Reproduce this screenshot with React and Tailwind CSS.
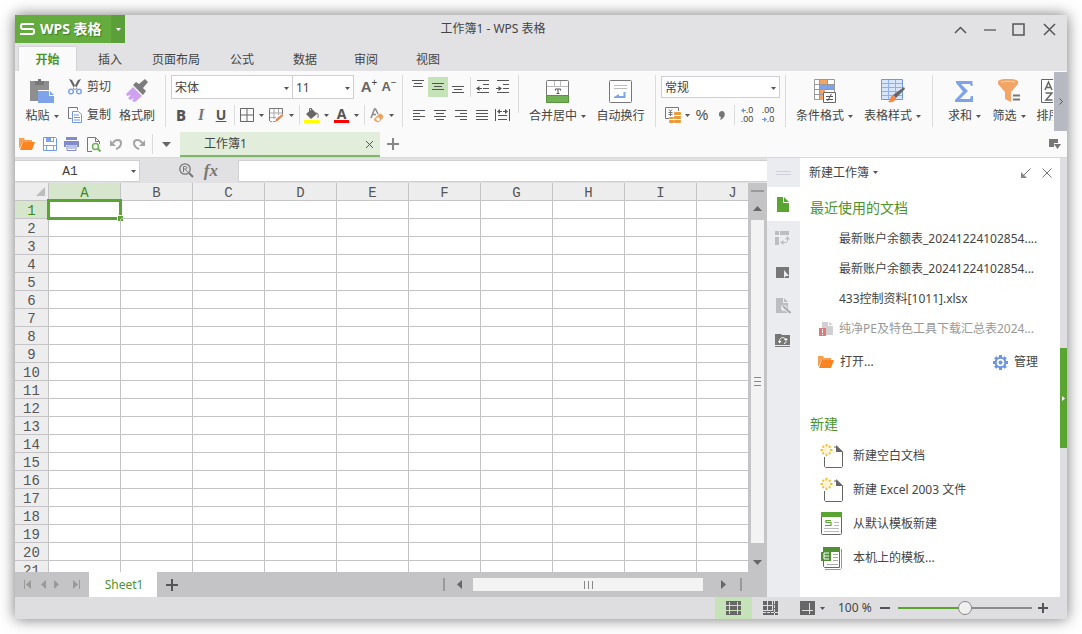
import { useState } from "react";

const COLUMNS = ["A", "B", "C", "D", "E", "F", "G", "H", "I", "J"];
const ROWS = Array.from({ length: 21 }, (_, i) => i + 1);

const MENU_TABS = [
  { label: "插入", width: "w-[66px]" },
  { label: "页面布局", width: "w-[66px]" },
  { label: "公式", width: "w-[66px]" },
  { label: "数据", width: "w-[60px]" },
  { label: "审阅", width: "w-[62px]" },
  { label: "视图", width: "w-[62px]" },
];

const RECENT_FILES = [
  "最新账户余额表_20241224102854....",
  "最新账户余额表_20241224102854...",
  "433控制资料[1011].xlsx",
];

function Svg({ w, h, className = "", children }) {
  return (
    <svg
      width={w}
      height={h}
      viewBox={`0 0 ${w} ${h}`}
      fill="none"
      className={`shrink-0 ${className}`}
      aria-hidden="true"
    >
      {children}
    </svg>
  );
}

function Caret({ className = "text-[#555]" }) {
  return (
    <Svg w={5} h={3} className={className}>
      <path d="M0 0h5L2.500 3z" fill="currentColor" />
    </Svg>
  );
}

function Sep({ className = "h-[52px] mx-[5px] mt-[2px]" }) {
  return <div className={`w-px shrink-0 bg-[#dcdcde] ${className}`} />;
}

function Tool({ label, className = "w-5 h-5", children }) {
  return (
    <button aria-label={label} className={`shrink-0 flex items-center justify-center ${className}`}>
      {children}
    </button>
  );
}

function DropTool({ label, className = "w-[29px] gap-[4px]", children }) {
  return (
    <button aria-label={label} className={`h-5 shrink-0 flex items-center ${className}`}>
      {children}
      <Caret />
    </button>
  );
}

function BigTool({ label, caret, className, icon }) {
  return (
    <button className={`h-[58px] shrink-0 flex flex-col items-center whitespace-nowrap ${className}`}>
      <span className="h-[32px] pt-[4px] flex items-center justify-center">{icon}</span>
      <span className="h-[22px] flex items-center gap-[4px]">
        {label}
        {caret && <Caret />}
      </span>
    </button>
  );
}

function SelectBox({ label, value, className }) {
  return (
    <div className={`relative shrink-0 ${className}`}>
      <select
        aria-label={label}
        className="appearance-none w-full h-full pt-px pl-[3px] bg-white border border-[#cfcfd2] outline-none"
      >
        <option>{value}</option>
      </select>
      <Caret className="absolute right-[4px] top-1/2 pointer-events-none text-[#555]" />
    </div>
  );
}

/* ---------- ribbon icons ---------- */

const PasteIcon = () => (
  <Svg w={24} h={24}>
    <path d="M0 2h5v4h9V2h5v9H8v11H0z" fill="#8e8e8e" />
    <path d="M5 2h3V0h3v2h3v4H5z" fill="#777" />
    <path d="M8 12h11v5h5v7H8z" fill="#7ea3ea" />
    <path d="M20 12l4 4h-4z" fill="#7ea3ea" />
  </Svg>
);

const CutIcon = () => (
  <Svg w={14} h={16}>
    <path d="M1 0l3 1 5 9-2 1zM13 0l-3 1-5 9 2 1z" fill="#666" />
    <circle cx="3" cy="12.500" r="2.300" stroke="#7ea3ea" strokeWidth="1.500" />
    <circle cx="11" cy="12.500" r="2.300" stroke="#7ea3ea" strokeWidth="1.500" />
  </Svg>
);

const CopyIcon = () => (
  <Svg w={14} h={16}>
    <path d="M3.500 11.500h-3v-11h9V3" stroke="#777" />
    <path d="M4.500 4.500h6l3 3v8h-9z" stroke="#6f98e6" fill="#fff" />
    <path d="M6 8h5M6 10.500h6M6 13h6" stroke="#6f98e6" />
  </Svg>
);

const BrushIcon = () => (
  <Svg w={24} h={24}>
    <path d="M8 6l3-3 3 2 6-5 3 3-5 6 3 3-3 4z" fill="#7c7c7c" />
    <path d="M8 8l9 9-7 6-3-1 2-3-4 2-2-2 3-3-4 1-1-2z" fill="#cfa2f0" />
  </Svg>
);

const BorderIcon = () => (
  <Svg w={14} h={14}>
    <path d="M.5.5h13v13H.5zM7 1v12M1 7h12" stroke="#666" />
  </Svg>
);

const DrawBorderIcon = () => (
  <Svg w={15} h={15}>
    <path d="M.5 13V.5h13V6" stroke="#777" />
    <path d="M5 1v10M9.500 1v6M1 5h12M1 9.500h6" stroke="#aaa" />
    <path d="M1 13.500h6" stroke="#f07a3c" strokeDasharray="2 1" />
    <path d="M6 14l1-3 6-5 1.500 1.500-6 5.500z" fill="#f0834a" />
  </Svg>
);

const FillIcon = () => (
  <Svg w={15} h={15}>
    <path d="M8 1l5 5-6 5-5-5z" fill="#666" />
    <path d="M5.500 5V0.500h2V3M12 5c3 0 2 3 2 5" stroke="#666" />
    <path d="M0 12h15v3H0z" fill="#ff0" />
  </Svg>
);

const EraseIcon = () => (
  <Svg w={14} h={15}>
    <path d="M1 10L4.500 1h1L8 6M2.500 6.500H6" stroke="#888" strokeWidth="1.500" />
    <path d="M4 11l5-5c2-1 5 1 4 4l-4 4c-2 1-5-1-5-3z" fill="#eba55f" />
    <path d="M6 11l2-2 2 2-1 2c-1 0-2 0-3-2z" fill="#fff" />
  </Svg>
);

function Lines({ rows, w = 12, h = 15 }) {
  return (
    <Svg w={w} h={h}>
      {rows.map(([x1, x2, y]) => (
        <path key={y} d={`M${x1} ${y}.5H${x2}`} stroke="#555" />
      ))}
    </Svg>
  );
}

const TOP_ROWS = [[0, 12, 0], [2, 10, 3], [1, 11, 6]];
const MIDDLE_ROWS = [[0, 12, 3], [2, 10, 6], [0, 12, 9]];
const BOTTOM_ROWS = [[0, 12, 6], [2, 10, 9], [0, 12, 12]];
const LEFT_ROWS = [[0, 12, 2], [0, 7, 5], [0, 12, 8], [0, 7, 11]];
const CENTER_ROWS = [[0, 12, 2], [2, 10, 5], [0, 12, 8], [2, 10, 11]];
const RIGHT_ROWS = [[0, 12, 2], [5, 12, 5], [0, 12, 8], [5, 12, 11]];
const JUSTIFY_ROWS = [[0, 12, 2], [0, 12, 5], [0, 12, 8], [0, 12, 11]];

const IndentIcon = ({ more }) => (
  <Svg w={14} h={14}>
    <path d="M1 .5h12M7 4.500h6M7 8.500h6M1 12.500h12" stroke="#555" />
    {more ? (
      <path d="M0 8h2.500V6L6 8.500 2.500 11V9H0z" fill="#555" />
    ) : (
      <path d="M6 8H3.500V6L0 8.500 3.500 11V9H6z" fill="#555" />
    )}
  </Svg>
);

const DistributeIcon = () => (
  <Svg w={15} h={12}>
    <path d="M.5 0v12M14.500 0v12M3 6.500h9M3 10.500h9" stroke="#555" />
    <path d="M2 2.500L5 0v2h2v1H5v2zM13 2.500L10 0v2H8v1h2v2z" fill="#555" />
  </Svg>
);

const MergeIcon = () => (
  <Svg w={23} h={23}>
    <rect x=".5" y=".5" width="22" height="22" rx="1" fill="#fff" stroke="#777" />
    <path d="M8.500 1v5M14.500 1v5M1 6.500h21" stroke="#bbb" />
    <path d="M9.500 10.500V9h5v1.500M12 9v5M10.500 13.500h3" stroke="#555" />
    <path d="M.5 15.500h22v7H.5z" fill="#74b055" stroke="#55963a" />
  </Svg>
);

const WrapIcon = () => (
  <Svg w={23} h={23}>
    <rect x=".5" y=".5" width="22" height="22" rx="1" fill="#fff" stroke="#777" />
    <path d="M5 5.500h13M5 8.500h13" stroke="#bbb" />
    <path d="M15.500 12v5H8" stroke="#7ea3ea" strokeWidth="2" />
    <path d="M5 17l5-3v4H5z" fill="#7ea3ea" />
  </Svg>
);

const CurrencyIcon = () => (
  <Svg w={17} h={16}>
    <path d="M4 11.500H.5V.5h13V4" stroke="#777" />
    <path d="M4 2.500l1.500 2 1.500-2M5.500 4v5M3.500 5.500h4M3.500 7.500h4" stroke="#777" />
    <rect x="9" y="5" width="7" height="3" rx="1" fill="#ec9a35" />
    <rect x="9" y="9" width="7" height="3" rx="1" fill="#ec9a35" />
    <rect x="9" y="13" width="7" height="3" rx="1" fill="#ec9a35" />
    <rect x="4" y="10" width="5" height="2" rx="1" fill="#ec9a35" />
    <rect x="4" y="13" width="5" height="3" rx="1" fill="#ec9a35" />
  </Svg>
);

const BlueArrow = ({ right }) => (
  <Svg w={5} h={5} className={right ? "-scale-x-100" : ""}>
    <path d="M0 2.500L3 0v2h2v1H3v2z" fill="#6f98e6" />
  </Svg>
);

function DecimalIcon({ grow }) {
  return (
    <span className="flex flex-col items-end font-['Liberation_Sans',sans-serif] text-[9px] leading-[9px]">
      <span className="flex items-center">
        {grow && <BlueArrow />}
        {grow ? ".0" : ".00"}
      </span>
      <span className="flex items-center">
        {!grow && <BlueArrow right />}
        {grow ? ".00" : ".0"}
      </span>
    </span>
  );
}

const CondIcon = () => (
  <Svg w={22} h={24}>
    <path d="M.5.5h20v20H.5z" fill="#fff" stroke="#999" />
    <path d="M6 1h8v5H6z" fill="#f2a566" />
    <path d="M6 6h14v5H6z" fill="#7ea3ea" />
    <path d="M6 11h5v4H6zM6 16h3v5H6z" fill="#f2a566" />
    <path d="M5.500 1v20M13.500 1v10M1 5.500h19M1 10.500h19M1 15.500h8" stroke="#999" />
    <path d="M9.500 13.500h12v10h-12z" fill="#fff" stroke="#666" />
    <path d="M12 17.500h7M12 20.500h7M17.500 15l-4 7" stroke="#555" />
  </Svg>
);

const StyleIcon = () => (
  <Svg w={24} h={24}>
    <path d="M.5.5h21v20H.5z" fill="#d9e5fb" stroke="#6f98e6" />
    <path d="M1 4.500h20M1 8.500h20M1 12.500h20M1 16.500h20M7.500 1v19M14.500 1v19" stroke="#8fb0ee" />
    <path d="M23 8l1 2-9 9-3-3z" fill="#666" />
    <path d="M12 16l3 3c-1 4-4 5-8 4 2-1 2-6 5-7z" fill="#f08a45" />
  </Svg>
);

const SumIcon = () => (
  <Svg w={19} h={22}>
    <path d="M1 1h16.500v5H16l-1-2H6l7 7-8 8h10l1-3h2v6H0v-2l8-8.500L1 3z" fill="#7ea3ea" />
  </Svg>
);

const FilterIcon = () => (
  <Svg w={23} h={24}>
    <path d="M0 2c4-3 16-3 20 0v3l-7 8v10l-6-3v-7L0 5z" fill="#f2a566" />
    <path d="M3 3c4-1 10-1 14 0" stroke="#fbd9bd" />
    <path d="M15 16.500h7M15 20.500h7" stroke="#777" strokeWidth="2" />
  </Svg>
);

const SortIcon = () => (
  <Svg w={24} h={24}>
    <path d="M.5.5h22v23H.5z" fill="#fff" stroke="#666" />
    <path d="M4 11L7.500 3 11 11M5 8.500h5M4.500 14H11l-6 7h6.500" stroke="#666" strokeWidth="1.500" />
  </Svg>
);

/* ---------- small icons ---------- */

const FolderIcon = () => (
  <Svg w={16} h={12}>
    <path d="M0 0h5l1 2h7v2H4L1 10H0z" fill="#f5a153" />
    <path d="M4 4h12l-3 8H1z" fill="#fa8520" />
  </Svg>
);

const SaveIcon = () => (
  <Svg w={14} h={14}>
    <path d="M.5.5h12l1 1v12H.5z" stroke="#6f98e6" fill="#fff" />
    <path d="M3 1h8v4H3zM1 8h12v1H1zM3 9h1v5H3zM10 9h1v5h-1z" fill="#7ea3ea" />
    <path d="M8 1h2v3H8z" fill="#fff" />
  </Svg>
);

const PrintIcon = () => (
  <Svg w={15} h={14}>
    <path d="M2 0h11v3H2zM0 4h15v6h-2V8H2v2H0z" fill="#8189cf" />
    <path d="M3 9h9v4.500H3z" fill="#fff" stroke="#8189cf" />
    <path d="M4 11h7" stroke="#8189cf" />
  </Svg>
);

const PreviewIcon = () => (
  <Svg w={14} h={15}>
    <path d="M5 14.500H.5V.5h8l4 4V7M8.500 1v3.500H12" stroke="#777" />
    <circle cx="8.500" cy="9.500" r="3" stroke="#6fb05a" strokeWidth="1.500" />
    <path d="M11 12l2.500 2.500" stroke="#6fb05a" strokeWidth="2" />
  </Svg>
);

const UndoIcon = ({ flip }) => (
  <Svg w={13} h={12} className={flip ? "-scale-x-100" : ""}>
    <path d="M3 5c2-4 8-4 8 0 0 3-2 5-5 6" stroke="#a3a3a3" strokeWidth="2" />
    <path d="M0 2v6h6z" fill="#a3a3a3" />
  </Svg>
);

const NewDocIcon = () => (
  <Svg w={24} h={26}>
    <path d="M4.500 14v9.500l1 1h16l1-1V9l-5-5H14" stroke="#666" fill="#fff" />
    <path d="M16 2l7 7h-7z" fill="#666" />
    <circle cx="6.500" cy="7" r="3" fill="#fdf3d5" />
    <path
      d="M6.500 1v2.500M6.500 10.500V13M.500 7H3M10 7h2.500M2.500 3l1.500 1.500M9 9.500l1.500 1.500M10.500 3L9 4.500M4 9.500L2.500 11"
      stroke="#f8bd30"
      strokeWidth="2"
    />
  </Svg>
);

const DefaultTemplateIcon = () => (
  <Svg w={24} h={26}>
    <rect x="1.500" y="1.500" width="20" height="22" rx="1" stroke="#666" fill="#fff" />
    <path d="M1 1h21v5H1z" fill="#5aa532" />
    <path d="M11 9.500H6v2h5v3H5" stroke="#5aa532" strokeWidth="1.200" />
    <path d="M14 11.500h5M14 14.500h5M4 17.500h15M4 20.500h15" stroke="#bbb" />
  </Svg>
);

const LocalTemplateIcon = () => (
  <Svg w={24} h={26}>
    <path d="M5 24.500h15.500l1-1V4" stroke="#999" />
    <path d="M3.500 14v7.500l1 1h15v-20" stroke="#666" fill="#fff" />
    <path d="M3 2h17v5h-9v9H1V7h2z" fill="#4f8f35" />
    <path d="M9 8H4v6h5M4 11h5" stroke="#fff" />
    <path d="M13 9.500h5M13 12.500h5M13 15.500h5M7 19.500h11" stroke="#aaa" />
  </Svg>
);

const GearIcon = () => (
  <Svg w={15} h={15}>
    <path
      d="M7.500 0v15M0 7.500h15M2.200 2.200l10.600 10.600M12.800 2.200L2.200 12.800"
      stroke="#6b95e0"
      strokeWidth="3"
    />
    <circle cx="7.500" cy="7.500" r="4.800" fill="#fff" stroke="#6b95e0" strokeWidth="2" />
    <circle cx="7.500" cy="7.500" r="2" fill="#6b95e0" />
  </Svg>
);

const NEW_ITEMS = [
  { label: "新建空白文档", icon: <NewDocIcon /> },
  { label: "新建 Excel 2003 文件", icon: <NewDocIcon /> },
  { label: "从默认模板新建", icon: <DefaultTemplateIcon /> },
  { label: "本机上的模板...", icon: <LocalTemplateIcon /> },
];

function Plus({ size = 12, className = "text-[#555]" }) {
  const c = size / 2 - 1;
  return (
    <Svg w={size} h={size} className={className}>
      <path d={`M${c} 0h2v${size}h-2zM0 ${c}h${size}v2H0z`} fill="currentColor" />
    </Svg>
  );
}

/* ---------- sections ---------- */

function TitleBar() {
  return (
    <header className="h-[31px] flex items-start">
      <button className="h-7 w-[96px] pl-[5px] flex items-center gap-[5px] bg-[#65ac3e] text-white font-bold text-[14px] whitespace-nowrap [text-shadow:1px_1px_1px_#3f7a22]">
        <Svg w={15} h={12}>
          <path d="M14 1H3Q1 1 1 3v1Q1 6 3 6h9q2 0 2 2v1q0 2-2 2H0" stroke="#fff" strokeWidth="2" />
        </Svg>
        <span>WPS 表格</span>
      </button>
      <button aria-label="菜单" className="h-7 w-[14px] flex items-center justify-center bg-[#5b9f38]">
        <Caret className="text-white" />
      </button>
      <h1 className="flex-1 h-7 pr-[85px] flex items-center justify-center">工作簿1 - WPS 表格</h1>
      <div className="flex h-[29px] items-center text-[#555]">
        <Tool label="收起" className="w-[29px] h-5">
          <Svg w={13} h={8}>
            <path d="M1 7l5.500-5.500L12 7" stroke="currentColor" strokeWidth="1.500" />
          </Svg>
        </Tool>
        <Tool label="最小化" className="w-[29px] h-5">
          <Svg w={12} h={2}>
            <path d="M0 0h12v2H0z" fill="#888" />
          </Svg>
        </Tool>
        <Tool label="最大化" className="w-[28px] h-5">
          <Svg w={13} h={13}>
            <path d="M1 1h11v11H1z" stroke="currentColor" strokeWidth="1.500" />
          </Svg>
        </Tool>
        <Tool label="关闭" className="w-[35px] h-5">
          <Svg w={13} h={13}>
            <path d="M1 1l11 11M12 1L1 12" stroke="currentColor" strokeWidth="1.500" />
          </Svg>
        </Tool>
      </div>
    </header>
  );
}

function MenuTabs() {
  return (
    <nav className="h-[25px] pl-[3px] flex">
      <button className="w-[59px] pt-px bg-[#fafafa] border border-b-0 border-[#d4d4d6] text-[#4b942b] font-bold">
        开始
      </button>
      {MENU_TABS.map((tab) => (
        <button key={tab.label} className={`pt-[2px] ${tab.width}`}>
          {tab.label}
        </button>
      ))}
    </nav>
  );
}

function Ribbon() {
  return (
    <div className="h-[60px] flex bg-[#fafafa] pt-[2px]">
      <div className="flex-1 min-w-0 flex overflow-hidden mr-[1px]">
        <div className="flex shrink-0 pl-[2px]">
          <BigTool label="粘贴" caret className="w-[50px]" icon={<PasteIcon />} />
          <div className="w-[47px]">
            <button className="h-[28px] flex items-center gap-[5px] whitespace-nowrap pl-[1px]">
              <CutIcon /> 剪切
            </button>
            <button className="h-[28px] flex items-center gap-[5px] whitespace-nowrap pl-[1px]">
              <CopyIcon /> 复制
            </button>
          </div>
          <BigTool label="格式刷" className="w-[46px]" icon={<BrushIcon />} />
        </div>
        <Sep />

        <div className="w-[226px] shrink-0">
          <div className="h-[28px] flex items-center">
            <SelectBox label="字体" value="宋体" className="w-[122px] h-6" />
            <SelectBox label="字号" value="11" className="w-[62px] h-6 -ml-px" />
            <Tool label="增大字号" className="w-[22px] h-5 ml-[4px]">
              <span className="font-['Liberation_Sans',sans-serif] text-[15px] leading-4 font-bold text-[#666]">A</span>
              <span className="text-[10px] -mt-[10px]">+</span>
            </Tool>
            <Tool label="减小字号" className="w-[18px] h-5">
              <span className="font-['Liberation_Sans',sans-serif] text-[13px] leading-4 font-bold text-[#666]">A</span>
              <span className="text-[10px] -mt-[10px]">−</span>
            </Tool>
          </div>
          <div className="h-[28px] flex items-center">
            <Tool label="加粗">
              <span className="text-[15px] font-extrabold text-[#555]">B</span>
            </Tool>
            <Tool label="倾斜">
              <span className="font-['Liberation_Serif',serif] text-[16px] italic font-bold text-[#777]">I</span>
            </Tool>
            <Tool label="下划线">
              <span className="text-[14px] leading-4 font-bold text-[#555] underline">U</span>
            </Tool>
            <Sep className="h-5 mx-[3px]" />
            <DropTool label="边框" className="w-[29px] pl-[2px] gap-[5px]"><BorderIcon /></DropTool>
            <DropTool label="绘图边框" className="w-[29px] pl-[2px] gap-[5px]"><DrawBorderIcon /></DropTool>
            <Sep className="h-5 mx-[3px]" />
            <DropTool label="填充颜色" className="w-[30px] pl-[1px] gap-[5px]"><FillIcon /></DropTool>
            <DropTool label="字体颜色" className="w-[28px] pl-[1px] gap-[5px]">
              <span className="w-[15px] h-[15px] border-b-[3px] border-[#f00] text-center text-[14px] leading-[11px] font-bold text-[#555]">
                A
              </span>
            </DropTool>
            <Sep className="h-5 mx-[3px]" />
            <DropTool label="清除" className="w-[29px] pl-[2px] gap-[5px]"><EraseIcon /></DropTool>
          </div>
        </div>
        <Sep />

        <div className="shrink-0">
          <div className="h-[28px] flex items-center">
            <Tool label="顶端对齐"><Lines rows={TOP_ROWS} /></Tool>
            <Tool label="垂直居中" className="w-5 h-5 bg-[#c6e2b8]"><Lines rows={MIDDLE_ROWS} /></Tool>
            <Tool label="底端对齐"><Lines rows={BOTTOM_ROWS} /></Tool>
            <Sep className="h-5 mx-[2px]" />
            <Tool label="减少缩进"><IndentIcon /></Tool>
            <Tool label="增加缩进"><IndentIcon more /></Tool>
          </div>
          <div className="h-[28px] flex items-center">
            <Tool label="左对齐" className="w-[21px] h-5"><Lines rows={LEFT_ROWS} /></Tool>
            <Tool label="水平居中" className="w-[21px] h-5"><Lines rows={CENTER_ROWS} /></Tool>
            <Tool label="右对齐" className="w-[21px] h-5"><Lines rows={RIGHT_ROWS} /></Tool>
            <Tool label="两端对齐" className="w-[21px] h-5"><Lines rows={JUSTIFY_ROWS} /></Tool>
            <Tool label="分散对齐" className="w-[21px] h-5"><DistributeIcon /></Tool>
          </div>
        </div>
        <Sep className="h-[38px] mx-[5px] mt-[2px]" />

        <BigTool label="合并居中" caret className="w-[67px]" icon={<MergeIcon />} />
        <BigTool label="自动换行" className="w-[59px]" icon={<WrapIcon />} />
        <Sep />

        <div className="w-[119px] shrink-0">
          <div className="h-[28px] flex items-center">
            <SelectBox label="数字格式" value="常规" className="w-full h-[22px]" />
          </div>
          <div className="h-[28px] flex items-center">
            <DropTool label="货币" className="w-[31px] pl-[4px] gap-[3px]"><CurrencyIcon /></DropTool>
            <Tool label="百分比">
              <span className="font-['Liberation_Sans',sans-serif] text-[14px]">%</span>
            </Tool>
            <Tool label="千位分隔">
              <Svg w={6} h={9}>
                <path d="M3 0c4 0 4 7-2 9l1-3C-1 6-1 0 3 0z" fill="#777" />
              </Svg>
            </Tool>
            <Sep className="h-5 mx-[2px]" />
            <Tool label="增加小数位"><DecimalIcon grow /></Tool>
            <Tool label="减少小数位" className="w-[22px] h-5"><DecimalIcon /></Tool>
          </div>
        </div>
        <Sep />

        <BigTool label="条件格式" caret className="w-[67px]" icon={<CondIcon />} />
        <BigTool label="表格样式" caret className="w-[69px]" icon={<StyleIcon />} />
        <Sep />
        <BigTool label="求和" caret className="w-[45px] ml-[4px]" icon={<SumIcon />} />
        <BigTool label="筛选" caret className="w-[44px]" icon={<FilterIcon />} />
        <BigTool label="排序" caret className="w-[44px]" icon={<SortIcon />} />
      </div>
      <button aria-label="更多" className="w-[13px] -mt-px flex items-center justify-center bg-[#b6b9c1]">
        <Svg w={4} h={7}>
          <path d="M.5.5l3 3-3 3" stroke="#555" />
        </Svg>
      </button>
    </div>
  );
}

function DocumentBar() {
  return (
    <div className="h-[27px] flex items-center bg-[#fafafa] border-b border-[#d8d8dc]">
      <div className="flex">
        <Tool label="打开" className="w-[24px] h-5"><FolderIcon /></Tool>
        <Tool label="保存" className="w-[22px] h-5"><SaveIcon /></Tool>
        <Tool label="打印" className="w-[21px] h-5"><PrintIcon /></Tool>
        <Tool label="打印预览" className="w-[23px] h-5"><PreviewIcon /></Tool>
        <Tool label="撤销" className="w-[22px] h-5"><UndoIcon /></Tool>
        <Tool label="恢复" className="w-[22px] h-5"><UndoIcon flip /></Tool>
      </div>
      <Sep className="h-5 ml-[3px]" />
      <Tool label="自定义" className="w-[27px] h-5">
        <Svg w={9} h={5}>
          <path d="M0 0h9L4.500 5z" fill="#666" />
        </Svg>
      </Tool>
      <div className="self-end h-[25px] w-[200px] pt-px pl-[24px] pr-[6px] flex items-center justify-between bg-[#e2eedb] border-b-2 border-[#7fb768]">
        <span>工作簿1</span>
        <button aria-label="关闭文档">
          <Svg w={9} h={9}>
            <path d="M1 1l7 7M8 1L1 8" stroke="#555" />
          </Svg>
        </button>
      </div>
      <Tool label="新建文档" className="w-[26px] h-5">
        <Plus size={12} className="text-[#888]" />
      </Tool>
      <Tool label="窗口列表" className="w-[18px] h-5 ml-auto mr-[3px]">
        <Svg w={12} h={10}>
          <path d="M0 0h9v4H5v4H0zM5 5h7L8.500 10z" fill="#777" />
        </Svg>
      </Tool>
    </div>
  );
}

function FormulaBar() {
  return (
    <div className="h-[25px] flex items-center bg-[#e1e1e4]">
      <div className="relative w-[125px] h-[22px]">
        <input
          aria-label="名称框"
          defaultValue="A1"
          className="w-full h-full pt-[2px] pr-[14px] text-center bg-white border border-l-0 border-[#d0d0d3] outline-none font-['Liberation_Mono','Noto_Sans_CJK_SC',monospace] text-[13px]"
        />
        <Caret className="absolute right-[4px] top-[10px] text-[#555]" />
      </div>
      <div className="w-[98px] pr-[20px] flex items-center justify-end gap-[10px]">
        <button aria-label="查找">
          <Svg w={15} h={15}>
            <circle cx="6" cy="6" r="5.200" stroke="#777" strokeWidth="1.300" />
            <path d="M10 10l4 4" stroke="#777" strokeWidth="2" />
            <path d="M4.500 9V3.500h2c2 0 2 2.500 0 2.500h-2M6.500 6.500l2 2.500" stroke="#777" />
          </Svg>
        </button>
        <button
          aria-label="插入函数"
          className="font-['Liberation_Serif',serif] text-[17px] leading-5 italic font-bold text-[#777]"
        >
          fx
        </button>
      </div>
      <input
        aria-label="编辑栏"
        className="flex-1 min-w-0 h-[22px] bg-white border border-r-0 border-[#d0d0d3] outline-none"
      />
    </div>
  );
}

function Grid() {
  return (
    <div className="flex-1 min-w-0 overflow-hidden bg-white">
      <table className="table-fixed w-[754px] border-separate border-spacing-0 font-['Liberation_Mono','Noto_Sans_CJK_SC',monospace] text-[14px] leading-[14px] text-[#555]">
        <thead>
          <tr className="h-[18px] bg-[#ededee]">
            <th className="w-[34px] p-0 border-r border-b border-[#c4c4c6]">
              <Svg w={9} h={9} className="ml-[21px]">
                <path d="M9 0v9H0z" fill="#bcbcbe" />
              </Svg>
            </th>
            {COLUMNS.map((col) => (
              <th
                key={col}
                className={`w-[72px] p-0 pt-[3px] border-r border-b border-[#c4c4c6] font-normal ${
                  col === "A" ? "bg-[#d5e6cd] text-[#3a8a1e]" : ""
                }`}
              >
                {col}
              </th>
            ))}
          </tr>
        </thead>
        <tbody>
          {ROWS.map((row) => (
            <tr key={row} className="h-[18px]">
              <th
                className={`p-0 pt-[3px] border-r border-b border-[#c4c4c6] font-normal ${
                  row === 1 ? "bg-[#d5e6cd] text-[#3a8a1e]" : "bg-[#ededee]"
                }`}
              >
                {row}
              </th>
              {COLUMNS.map((col) => (
                <td key={col} className="relative p-0 border-r border-b border-[#c4c4c6]">
                  {row === 1 && col === "A" && (
                    <div className="absolute -inset-[2px] border-[3px] border-[#5aa532]">
                      <span className="absolute -right-[4px] -bottom-[4px] size-[6px] bg-[#5aa532] border-t border-l border-white" />
                    </div>
                  )}
                </td>
              ))}
            </tr>
          ))}
        </tbody>
      </table>
    </div>
  );
}

function VerticalScroll() {
  return (
    <div className="w-[19px] shrink-0 flex flex-col items-center bg-[#c4c4c6]">
      <span className="mt-[7px] w-[13px] h-[2px] bg-[#999]" />
      <button aria-label="向上滚动" className="h-[28px] pt-[4px] flex items-center">
        <Svg w={9} h={5}>
          <path d="M0 5h9L4.500 0z" fill="#666" />
        </Svg>
      </button>
      <div className="flex-1 w-[13px] flex flex-col items-center justify-center gap-[3px] bg-[#f3f3f3]">
        <span className="w-[7px] h-px bg-[#888]" />
        <span className="w-[7px] h-px bg-[#888]" />
        <span className="w-[7px] h-px bg-[#888]" />
      </div>
      <button aria-label="向下滚动" className="h-[29px] pt-[10px] flex items-center">
        <Svg w={9} h={5}>
          <path d="M0 0h9L4.500 5z" fill="#666" />
        </Svg>
      </button>
    </div>
  );
}

function SheetBar() {
  return (
    <div className="h-[25px] shrink-0 flex items-center bg-[#c4c4c6]">
      <div className="w-[74px] pl-[9px] flex items-center text-[#999]">
        <button aria-label="第一张">
          <Svg w={8} h={9}>
            <path d="M0 0h1v9H0zM7 0v9L2 4.500z" fill="currentColor" />
          </Svg>
        </button>
        <button aria-label="上一张" className="ml-[8px]">
          <Svg w={6} h={9}>
            <path d="M6 0v9L1 4.500z" fill="currentColor" />
          </Svg>
        </button>
        <button aria-label="下一张" className="ml-[8px]">
          <Svg w={6} h={9}>
            <path d="M0 0v9l5-4.500z" fill="currentColor" />
          </Svg>
        </button>
        <button aria-label="最后一张" className="ml-[12px]">
          <Svg w={8} h={9}>
            <path d="M7 0h1v9H7zM1 0v9l5-4.500z" fill="currentColor" />
          </Svg>
        </button>
      </div>
      <button className="w-[68px] h-full pt-px pl-[2px] bg-white text-[#4b942b]">Sheet1</button>
      <Tool label="新建工作表" className="w-[30px] h-5">
        <Plus size={12} />
      </Tool>
      <div className="ml-auto flex items-center">
        <span className="w-[2px] h-[13px] bg-[#999]" />
        <Tool label="向左滚动" className="w-[28px] h-5">
          <Svg w={5} h={9}>
            <path d="M5 0v9L0 4.500z" fill="#666" />
          </Svg>
        </Tool>
        <div className="w-[230px] h-[13px] flex items-center justify-center gap-[3px] bg-[#f3f3f3]">
          <span className="w-px h-[8px] bg-[#888]" />
          <span className="w-px h-[8px] bg-[#888]" />
          <span className="w-px h-[8px] bg-[#888]" />
        </div>
        <Tool label="向右滚动" className="w-[37px] h-5 pl-[4px]">
          <Svg w={5} h={9}>
            <path d="M0 0v9l5-4.500z" fill="#666" />
          </Svg>
        </Tool>
        <span className="w-[2px] h-[13px] mr-[25px] bg-[#999]" />
      </div>
    </div>
  );
}

function SideTabs() {
  return (
    <div className="w-[33px] shrink-0 flex flex-col bg-[#ebecef]">
      <div className="h-[29px] flex flex-col items-center justify-center gap-[2px]">
        <span className="w-[15px] h-px bg-[#cfd0dc]" />
        <span className="w-[15px] h-px bg-[#cfd0dc]" />
      </div>
      <Tool label="新建" className="w-full h-[34px] pr-px bg-white">
        <Svg w={12} h={15}>
          <path d="M0 0h6v6h6v9H0zM7 0l5 5H7z" fill="#5aa532" />
        </Svg>
      </Tool>
      <Tool label="切换" className="w-full h-[34px] pr-[2px]">
        <Svg w={15} h={15}>
          <path d="M0 0h4v4H0zM5 0h9v4H5zM0 6h4v8H0z" fill="#bcbdc0" />
          <path d="M12.500 8v2.500l-1 1H8" stroke="#bcbdc0" />
          <path d="M12.500 5L15 8.500h-5zM5 11.500L8.500 9v5z" fill="#bcbdc0" />
        </Svg>
      </Tool>
      <Tool label="选择" className="w-full h-[34px] pr-[2px]">
        <Svg w={13} h={11}>
          <path d="M0 0h13v11H0z" fill="#777" />
          <path d="M8 3v8l2-2h3z" fill="#ebecef" />
        </Svg>
      </Tool>
      <Tool label="属性" className="w-full h-[34px]">
        <Svg w={15} h={16}>
          <path d="M0 0h7v5h5v10H0zM8 0l4 4H8z" fill="#bcbdc0" />
          <circle cx="8" cy="10" r="3" fill="#ebecef" />
          <path d="M8 10l7 5.500" stroke="#ebecef" strokeWidth="3" />
          <path d="M7 8l2 2 5.500 5" stroke="#aaabae" strokeWidth="2" />
        </Svg>
      </Tool>
      <Tool label="备份" className="w-full h-[34px] pr-[2px]">
        <Svg w={15} h={15}>
          <path d="M0 1h6l1 1h8v10H0zM0 13h15v1H0z" fill="#777" />
          <path d="M4.500 8.500c0-5 6-5 6-1M9 10.500c2 0 2-2 2-3" stroke="#fff" />
          <path d="M3 8h3.500L4.500 10.500zM9 7h4L11 5z" fill="#fff" />
        </Svg>
      </Tool>
    </div>
  );
}

function TaskPane() {
  return (
    <aside className="w-[260px] shrink-0 bg-white">
      <div className="h-[29px] pl-[9px] pr-[8px] flex items-center">
        <button className="flex items-center gap-[4px]">
          新建工作簿 <Caret />
        </button>
        <button aria-label="停靠" className="ml-auto">
          <Svg w={10} h={10}>
            <path d="M9.500.5L3 7" stroke="#777" />
            <path d="M0 4v6h6z" fill="#888" />
          </Svg>
        </button>
        <button aria-label="关闭窗格" className="ml-[11px]">
          <Svg w={10} h={10}>
            <path d="M.5.5l9 9M9.500.5l-9 9" stroke="#777" />
          </Svg>
        </button>
      </div>
      <h2 className="h-[37px] pt-[4px] pl-[10px] flex items-center text-[14px] text-[#4b942b]">最近使用的文档</h2>
      <ul>
        {RECENT_FILES.map((file, index) => (
          <li key={index} className="h-[30px] pl-[39px] flex items-center whitespace-nowrap">
            <a href="#">{file}</a>
          </li>
        ))}
        <li className="h-[30px] pl-[19px] flex items-center gap-[6px] whitespace-nowrap text-[#999]">
          <Svg w={14} h={14}>
            <path d="M3 0h6v4h5v9H3zM10 0l4 3h-4z" fill="#d0d0d2" />
            <path d="M0 6h7v8H0z" fill="#e07878" />
            <path d="M3 7h1v4H3zM3 12h1v1H3z" fill="#fff" />
          </Svg>
          <a href="#">纯净PE及特色工具下载汇总表2024...</a>
        </li>
      </ul>
      <div className="h-[36px] pl-[18px] pr-[22px] flex items-center justify-between">
        <button className="flex items-center gap-[6px]">
          <FolderIcon /> 打开...
        </button>
        <button className="flex items-center gap-[6px]">
          <GearIcon /> 管理
        </button>
      </div>
      <h2 className="mt-[33px] h-[22px] pl-[10px] flex items-center text-[14px] text-[#4b942b]">新建</h2>
      <ul className="pt-[4px]">
        {NEW_ITEMS.map((item) => (
          <li key={item.label}>
            <button className="h-[34px] pl-[20px] flex items-center gap-[9px]">
              {item.icon} {item.label}
            </button>
          </li>
        ))}
      </ul>
    </aside>
  );
}

function StatusBar() {
  const [zoom, setZoom] = useState(50);
  return (
    <footer className="h-[22px] shrink-0 pr-[19px] flex items-center justify-end bg-[#dedee0]">
      <Tool label="普通视图" className="w-[37px] h-full bg-[#c6e2b8]">
        <Svg w={15} h={14}>
          <path d="M0 0h15v14H0z" fill="#666" />
          <path d="M3.500 1v12M11.500 1v12M0 4.500h15M0 9.500h15" stroke="#c6e2b8" />
        </Svg>
      </Tool>
      <Tool label="分页预览" className="w-[37px] h-5">
        <Svg w={15} h={14}>
          <path d="M0 0h4v4H0zM5 0h4v4H5zM0 5h4v4H0zM5 5h4v4H5zM10 0h5v14H0v-4h10z" fill="#666" />
          <path d="M11.500 0v14M0 11.500h15" stroke="#dedee0" strokeDasharray="3 1" />
        </Svg>
      </Tool>
      <DropTool label="阅读模式" className="w-[30px] ml-[11px] gap-[5px]">
        <Svg w={15} h={14}>
          <path d="M0 0h15v14H0z" fill="#666" />
          <path d="M9.500 2v11M2 9.500h11" stroke="#dedee0" />
        </Svg>
      </DropTool>
      <label htmlFor="zoom" className="ml-[8px] w-[36px] whitespace-nowrap">100 %</label>
      <Tool label="缩小" className="w-[20px] h-5 pl-[1px]">
        <Svg w={10} h={2}>
          <path d="M0 0h10v2H0z" fill="#555" />
        </Svg>
      </Tool>
      <input
        id="zoom"
        type="range"
        value={zoom}
        onChange={(e) => setZoom(e.target.value)}
        className="ml-[4px] w-[134px] h-[2px] appearance-none bg-linear-to-r from-[#5aa532] from-50% to-[#8a8b8f] to-50% [&::-webkit-slider-thumb]:appearance-none [&::-webkit-slider-thumb]:size-[14px] [&::-webkit-slider-thumb]:rounded-full [&::-webkit-slider-thumb]:border [&::-webkit-slider-thumb]:border-[#888] [&::-webkit-slider-thumb]:bg-[#f0f0f1]"
      />
      <button aria-label="放大" className="ml-[6px]">
        <Plus size={10} />
      </button>
    </footer>
  );
}

export default function App() {
  return (
    <div className="h-screen p-[15px] bg-white font-['Noto_Sans','Noto_Sans_CJK_SC',sans-serif] text-[12px] leading-4 text-[#444]">
      <div className="h-full flex flex-col overflow-hidden bg-[#e2e2e4] shadow-[0_0_14px_rgba(0,0,0,0.55)]">
        <TitleBar />
        <MenuTabs />
        <Ribbon />
        <DocumentBar />
        <main className="flex-1 min-h-0 flex">
          <section className="flex-1 min-w-0 flex flex-col">
            <FormulaBar />
            <div className="flex-1 min-h-0 flex">
              <Grid />
              <VerticalScroll />
            </div>
            <SheetBar />
          </section>
          <SideTabs />
          <TaskPane />
          <div className="w-[7px] shrink-0 bg-[#dedee0]">
            <button
              aria-label="收起窗格"
              className="mt-[190px] w-full h-[100px] flex items-center justify-center bg-[#5aa532]"
            >
              <Svg w={3} h={5}>
                <path d="M0 0v5l3-2.500z" fill="#fff" />
              </Svg>
            </button>
          </div>
        </main>
        <StatusBar />
      </div>
    </div>
  );
}
